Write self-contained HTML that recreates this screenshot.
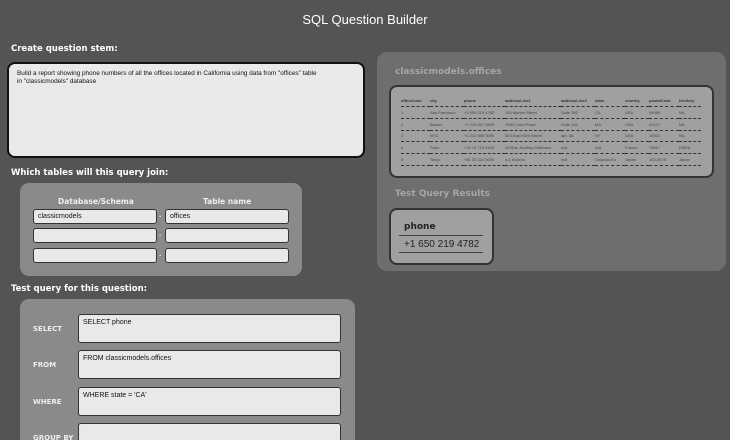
<!DOCTYPE html>
<html><head><meta charset="utf-8"><style>
*{margin:0;padding:0;box-sizing:border-box}
html{width:730px;height:440px;overflow:hidden;background:#545454}
body{width:730px;height:440px;overflow:hidden;background:#545454;font-family:"Liberation Sans",sans-serif;position:relative;color:#fff}
.a{position:absolute}
.lbl{font-weight:bold;font-size:8.5px;color:#fff;font-family:"DejaVu Sans",sans-serif}
.panel{background:#8a8a8a;border-radius:9px}
.inp{background:#e9e9e9;border:1px solid #333;border-radius:3px;height:15px;font-size:7px;color:#111;padding:3px 4px}
.ta{background:#e9e9e9;border:1px solid #333;border-radius:3px;height:29px;width:263px;left:78px;font-size:7px;color:#111;padding:4px 4px}
.ql{left:33px;font-weight:bold;font-size:7px;color:#eee;font-family:"DejaVu Sans",sans-serif}
.dot{font-size:8px;color:#eee;font-weight:bold}
table{border-collapse:collapse;font-size:4px;color:#444;table-layout:fixed}
td,th{text-align:left;height:11.7px;border-bottom:1px dashed #333;padding:0;font-weight:normal;white-space:nowrap;overflow:hidden}
th{font-weight:bold;color:#333}
</style></head><body>
<div class="a" style="left:0;width:730px;top:12px;text-align:center;font-size:13px">SQL Question Builder</div>
<div class="a lbl" style="left:11px;top:44px">Create question stem:</div>
<div class="a" style="left:7px;top:62px;width:358px;height:96px;background:#e9e9e9;border:2px solid #111;border-radius:8px;font-size:6.4px;color:#111;padding:6px 8px;line-height:8px;white-space:nowrap;overflow:hidden">Build a report showing phone numbers of all the offices located in California using data from "offices" table<br>in "classicmodels" database</div>

<div class="a lbl" style="left:11px;top:168px">Which tables will this query join:</div>
<div class="a panel" style="left:20px;top:183px;width:282px;height:93px"></div>
<div class="a lbl" style="left:58px;top:197px;font-size:7.5px;color:#eee">Database/Schema</div>
<div class="a lbl" style="left:203px;top:197px;font-size:7.5px;color:#eee">Table name</div>
<div class="a inp" style="left:33px;top:209px;width:124px">classicmodels</div>
<div class="a inp" style="left:165px;top:209px;width:124px">offices</div>
<div class="a inp" style="left:33px;top:228px;width:124px"></div>
<div class="a inp" style="left:165px;top:228px;width:124px"></div>
<div class="a inp" style="left:33px;top:248px;width:124px"></div>
<div class="a inp" style="left:165px;top:248px;width:124px"></div>
<div class="a dot" style="left:159px;top:210px">.</div>
<div class="a dot" style="left:159px;top:229px">.</div>
<div class="a dot" style="left:159px;top:249px">.</div>

<div class="a lbl" style="left:11px;top:284px">Test query for this question:</div>
<div class="a panel" style="left:20px;top:299px;width:335px;height:160px"></div>
<div class="a ql" style="top:325px">SELECT</div>
<div class="a ta" style="top:314px">SELECT phone</div>
<div class="a ql" style="top:361px">FROM</div>
<div class="a ta" style="top:350px">FROM classicmodels.offices</div>
<div class="a ql" style="top:398px">WHERE</div>
<div class="a ta" style="top:387px">WHERE state = 'CA'</div>
<div class="a ql" style="top:434px">GROUP BY</div>
<div class="a ta" style="top:423px"></div>

<div class="a" style="left:377px;top:52px;width:349px;height:219px;background:#6e6e6e;border-radius:10px"></div>
<div class="a" style="left:395px;top:67px;font-size:9px;font-weight:bold;color:#a6a6a6;font-family:'DejaVu Sans',sans-serif">classicmodels.offices</div>
<div class="a" style="left:389px;top:85px;width:325px;height:93px;background:#a0a0a0;border:2px solid #333;border-radius:8px"></div>
<table class="a" style="left:401px;top:95px;width:300px">
<colgroup><col style="width:29px"><col style="width:34px"><col style="width:41px"><col style="width:56px"><col style="width:34px"><col style="width:30px"><col style="width:24px"><col style="width:30px"><col style="width:22px"></colgroup>
<tr><th>officeCode</th><th>city</th><th>phone</th><th>addressLine1</th><th>addressLine2</th><th>state</th><th>country</th><th>postalCode</th><th>territory</th></tr>
<tr><td>1</td><td>San Francisco</td><td>+1 650 219 4782</td><td>100 Market Street</td><td>Suite 300</td><td>CA</td><td>USA</td><td>94080</td><td>NA</td></tr>
<tr><td>2</td><td>Boston</td><td>+1 215 837 0825</td><td>1550 Court Place</td><td>Suite 102</td><td>MA</td><td>USA</td><td>02107</td><td>NA</td></tr>
<tr><td>3</td><td>NYC</td><td>+1 212 555 3000</td><td>523 East 53rd Street</td><td>apt. 5A</td><td>NY</td><td>USA</td><td>10022</td><td>NA</td></tr>
<tr><td>4</td><td>Paris</td><td>+33 14 723 4404</td><td>43 Rue Jouffroy D'abbans</td><td>null</td><td>null</td><td>France</td><td>75017</td><td>EMEA</td></tr>
<tr><td>5</td><td>Tokyo</td><td>+81 33 224 5000</td><td>4-1 Kioicho</td><td>null</td><td>Chiyoda-Ku</td><td>Japan</td><td>102-8578</td><td>Japan</td></tr>
</table>
<div class="a" style="left:395px;top:189px;font-size:9px;font-weight:bold;color:#a6a6a6;font-family:'DejaVu Sans',sans-serif">Test Query Results</div>
<div class="a" style="left:389px;top:208px;width:105px;height:57px;background:#a0a0a0;border:2px solid #333;border-radius:8px"></div>
<div class="a" style="left:404px;top:222px;font-size:9px;font-weight:bold;color:#222;font-family:'DejaVu Sans',sans-serif">phone</div>
<div class="a" style="left:399px;top:235px;width:84px;border-top:1px solid #444"></div>
<div class="a" style="left:404px;top:239px;font-size:10px;color:#222">+1 650 219 4782</div>
<div class="a" style="left:399px;top:252px;width:84px;border-top:1px solid #444"></div>
</body></html>
